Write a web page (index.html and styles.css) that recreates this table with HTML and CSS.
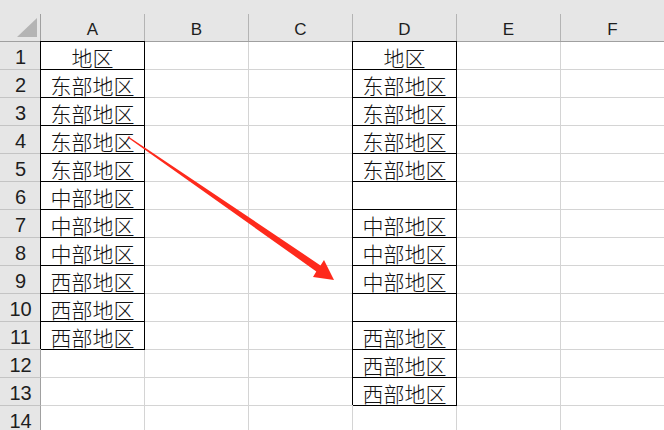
FILE: index.html
```html
<!DOCTYPE html>
<html lang="zh-CN">
<head>
<meta charset="utf-8">
<title>Sheet</title>
<link rel="stylesheet" href="styles.css">
</head>
<body>
<div class="sheet">
  <div class="grid">
    <div class="ch corner"><div class="in"><div class="tri"></div></div></div>
    <div class="ch blk"><div class="in">A</div></div>
    <div class="ch"><div class="in">B</div></div>
    <div class="ch"><div class="in">C</div></div>
    <div class="ch blk"><div class="in">D</div></div>
    <div class="ch"><div class="in">E</div></div>
    <div class="ch"><div class="in">F</div></div>

    <div class="rh">1</div><div class="c bx">地区</div><div class="c"></div><div class="c"></div><div class="c bx">地区</div><div class="c"></div><div class="c"></div>
    <div class="rh">2</div><div class="c bx">东部地区</div><div class="c"></div><div class="c"></div><div class="c bx">东部地区</div><div class="c"></div><div class="c"></div>
    <div class="rh">3</div><div class="c bx">东部地区</div><div class="c"></div><div class="c"></div><div class="c bx">东部地区</div><div class="c"></div><div class="c"></div>
    <div class="rh">4</div><div class="c bx">东部地区</div><div class="c"></div><div class="c"></div><div class="c bx">东部地区</div><div class="c"></div><div class="c"></div>
    <div class="rh">5</div><div class="c bx">东部地区</div><div class="c"></div><div class="c"></div><div class="c bx">东部地区</div><div class="c"></div><div class="c"></div>
    <div class="rh">6</div><div class="c bx">中部地区</div><div class="c"></div><div class="c"></div><div class="c bx"></div><div class="c"></div><div class="c"></div>
    <div class="rh">7</div><div class="c bx">中部地区</div><div class="c"></div><div class="c"></div><div class="c bx">中部地区</div><div class="c"></div><div class="c"></div>
    <div class="rh">8</div><div class="c bx">中部地区</div><div class="c"></div><div class="c"></div><div class="c bx">中部地区</div><div class="c"></div><div class="c"></div>
    <div class="rh">9</div><div class="c bx">西部地区</div><div class="c"></div><div class="c"></div><div class="c bx">中部地区</div><div class="c"></div><div class="c"></div>
    <div class="rh">10</div><div class="c bx">西部地区</div><div class="c"></div><div class="c"></div><div class="c bx"></div><div class="c"></div><div class="c"></div>
    <div class="rh">11</div><div class="c bx">西部地区</div><div class="c"></div><div class="c"></div><div class="c bx">西部地区</div><div class="c"></div><div class="c"></div>
    <div class="rh">12</div><div class="c"></div><div class="c"></div><div class="c"></div><div class="c bx">西部地区</div><div class="c"></div><div class="c"></div>
    <div class="rh">13</div><div class="c"></div><div class="c"></div><div class="c"></div><div class="c bx">西部地区</div><div class="c"></div><div class="c"></div>
    <div class="rh">14</div><div class="c"></div><div class="c"></div><div class="c"></div><div class="c"></div><div class="c"></div><div class="c"></div>
  </div>
  <svg class="arrow" width="664" height="430" viewBox="0 0 664 430" xmlns="http://www.w3.org/2000/svg">
    <polygon points="128.3,136.4 320.5,265.4 324,260 334,280 313,277 316.3,271.4 127.6,137.4" fill="#fe2a1c"/>
  </svg>
</div>
</body>
</html>
```

FILE: styles.css
```css
html, body {
  margin: 0;
  padding: 0;
  background: #ffffff;
  overflow: hidden;
}

.sheet {
  position: relative;
  width: 664px;
  height: 430px;
  overflow: hidden;
}

.grid {
  display: grid;
  grid-template-columns: 41px repeat(6, 104px);
  grid-template-rows: 42px repeat(14, 28px);
}

.ch {
  box-sizing: border-box;
  background: #e6e6e6;
  padding-top: 14px;
  border-bottom: 1px solid #a0a0a0;
}

.ch .in {
  box-sizing: border-box;
  height: 27px;
  border-right: 1px solid #b4b4b4;
  display: flex;
  align-items: center;
  justify-content: center;
  padding-top: 4px;
  font-family: "Liberation Sans", Arial, sans-serif;
  font-size: 17px;
  color: #1e1e1e;
}

.ch.corner .in {
  border-right-color: #a0a0a0;
  justify-content: flex-end;
  align-items: flex-end;
  padding: 0 3px 4px 0;
}

.ch.blk {
  border-bottom-color: #000000;
}

.tri {
  width: 20px;
  height: 19px;
  background: #b4b4b4;
  clip-path: polygon(100% 0, 100% 100%, 0 100%);
}

.rh {
  box-sizing: border-box;
  background: #e6e6e6;
  border-right: 1px solid #a0a0a0;
  border-bottom: 1px solid #c4c4c4;
  display: flex;
  align-items: center;
  justify-content: center;
  padding-top: 3px;
  padding-left: 1px;
  font-family: "Liberation Sans", Arial, sans-serif;
  font-size: 20px;
  color: #1e1e1e;
}

.c {
  box-sizing: border-box;
  border-right: 1px solid #d4d4d4;
  border-bottom: 1px solid #d4d4d4;
  display: flex;
  align-items: center;
  justify-content: center;
  padding-top: 3px;
  font-family: "Noto Sans CJK SC", sans-serif;
  font-weight: 300;
  font-size: 21px;
  color: #111111;
  white-space: nowrap;
}

.c.bx {
  border-right-color: #000000;
  border-bottom-color: #000000;
  box-shadow: -1px -1px 0 0 #000000;
}

.arrow {
  position: absolute;
  left: 0;
  top: 0;
  pointer-events: none;
}
```
